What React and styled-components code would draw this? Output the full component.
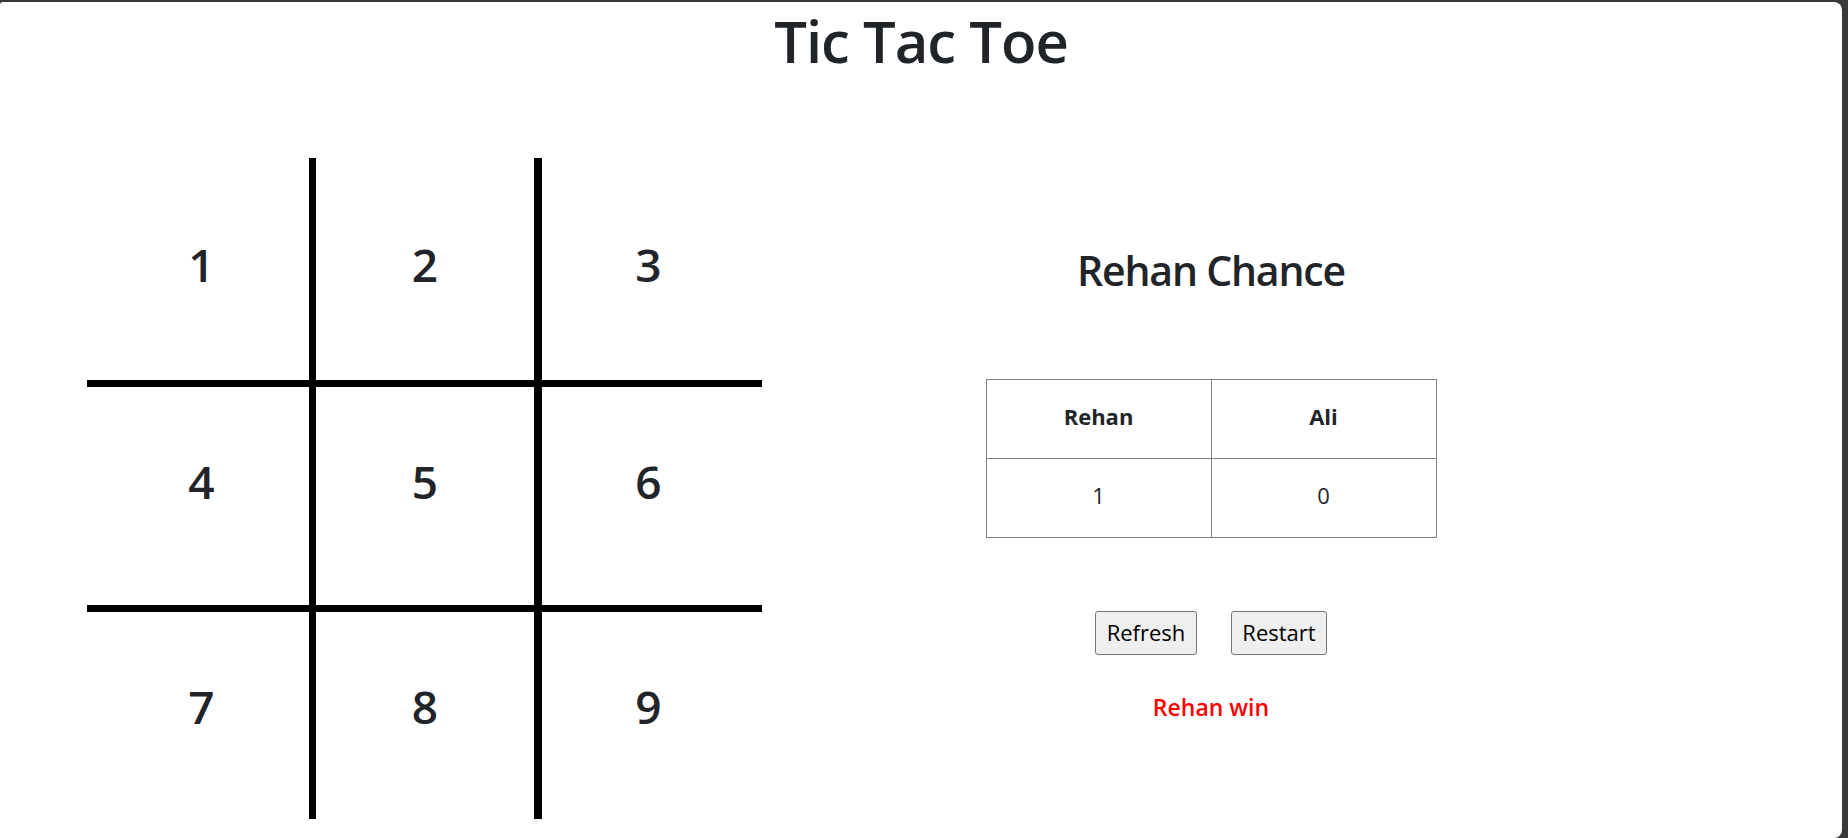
import React from "react";
import styled, { createGlobalStyle } from "styled-components";

const GlobalStyle = createGlobalStyle`
  html, body {
    margin: 0;
    padding: 0;
    background: #393939;
  }
  body {
    font-family: "Open Sans", "Noto Sans", sans-serif;
    color: #212529;
  }
`;

const Frame = styled.div`
  height: 838px;
  padding: 2px 6px 0 0;
  box-sizing: border-box;
  background: #393939;
`;

const Panel = styled.div`
  height: 836px;
  background: #fff;
  border-radius: 3px 8px 8px 0;
  padding-top: 4px;
  box-sizing: border-box;
  overflow: hidden;
`;

const Title = styled.h1`
  margin: 0;
  text-align: center;
  font-size: 58px;
  line-height: 1.2;
  font-weight: 600;
  letter-spacing: -1px;
`;

const Main = styled.div`
  display: flex;
  margin-top: 82px;
  padding-left: 87px;
`;

const Board = styled.div`
  display: grid;
  grid-template-columns: 222px 233px 220px;
  grid-template-rows: 222px 232px 207px;
`;

// nudges so the digits sit where the original puts them
const rowPad = [9, 29, 18];
const colPad = ["0 0 0 7px", "0", "0 7px 0 0"];

const Cell = styled.div`
  display: flex;
  align-items: center;
  justify-content: center;
  font-size: 46px;
  font-weight: 600;
  color: #212529;
  border-style: solid;
  border-color: #000;
  border-width: ${(p) => (p.$row === 1 ? "7px" : "0")}
    ${(p) => (p.$col === 1 ? "8px" : "0")}
    ${(p) => (p.$row === 1 ? "7px" : "0")}
    ${(p) => (p.$col === 1 ? "7px" : "0")};
  padding: ${(p) => colPad[p.$col]};
  padding-bottom: ${(p) => rowPad[p.$row]}px;
  box-sizing: border-box;
`;

const Side = styled.div`
  width: 898px;
  padding-top: 88px;
  display: flex;
  flex-direction: column;
  align-items: center;
`;

const Turn = styled.h2`
  margin: 0;
  font-size: 41px;
  line-height: 1.2;
  font-weight: 600;
  letter-spacing: -1.2px;
`;

const Score = styled.table`
  margin-top: 84px;
  width: 451px;
  border-collapse: collapse;
  font-size: 22px;
`;

const Head = styled.th`
  height: 72px;
  border: 1px solid #808080;
  font-weight: 700;
  padding: 0 0 6px;
  width: 50%;
`;

const Val = styled.td`
  height: 72px;
  border: 1px solid #808080;
  text-align: center;
  padding: 0 0 6px;
`;

const Buttons = styled.div`
  display: flex;
  gap: 34px;
  margin-top: 73px;
`;

const Btn = styled.button`
  height: 44px;
  width: ${(p) => p.$w}px;
  padding: 0 0 2px;
  font-family: "Open Sans", "Noto Sans", sans-serif;
  font-size: 22px;
  color: #000;
  background: #efefef;
  border: 1px solid #767676;
  border-radius: 3px;
`;

const Result = styled.div`
  margin-top: 39px;
  color: #ff0000;
  font-size: 23px;
  line-height: 1.2;
  font-weight: 600;
`;

export default function App() {
  const cells = [1, 2, 3, 4, 5, 6, 7, 8, 9];
  return (
    <Frame>
      <GlobalStyle />
      <Panel>
        <Title>Tic Tac Toe</Title>
        <Main>
          <Board>
            {cells.map((n, i) => (
              <Cell key={n} $row={Math.floor(i / 3)} $col={i % 3}>
                {n}
              </Cell>
            ))}
          </Board>
          <Side>
            <Turn>Rehan Chance</Turn>
            <Score>
              <thead>
                <tr>
                  <Head>Rehan</Head>
                  <Head>Ali</Head>
                </tr>
              </thead>
              <tbody>
                <tr>
                  <Val>1</Val>
                  <Val>0</Val>
                </tr>
              </tbody>
            </Score>
            <Buttons>
              <Btn $w={102}>Refresh</Btn>
              <Btn $w={96}>Restart</Btn>
            </Buttons>
            <Result>Rehan win</Result>
          </Side>
        </Main>
      </Panel>
    </Frame>
  );
}
